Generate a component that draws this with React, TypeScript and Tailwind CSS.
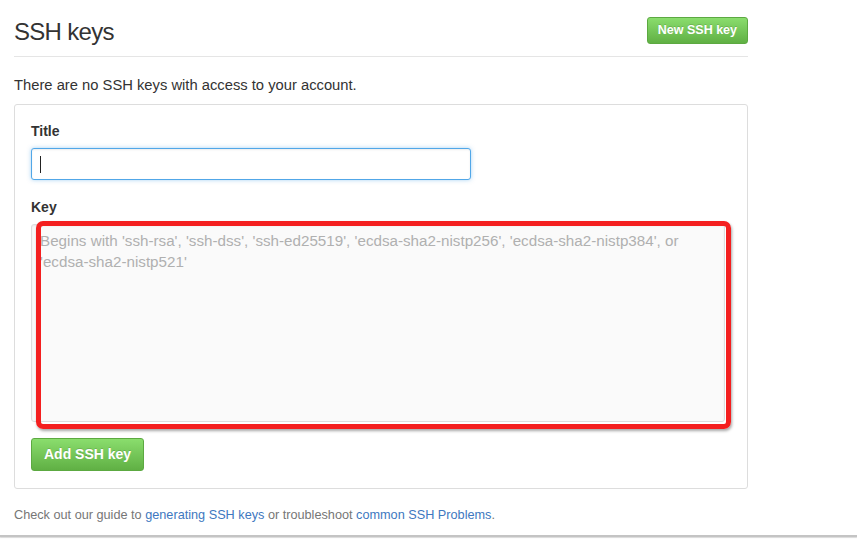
import React from "react";

export default function App() {
  return (
    <div className="relative w-[857px] h-[539px] overflow-hidden bg-white font-['Liberation_Sans',Arial,sans-serif] text-[#333]">
      <div className="ml-[14px] w-[734px] pt-[17px]">
        <div className="flex items-center justify-between border-b border-[#e5e5e5] pb-[12px]">
          <h2 className="translate-y-[1px] text-[24px] leading-[27px] font-normal tracking-[-0.7px] text-[#333]">SSH keys</h2>
          <button className="h-[27px] rounded-[3px] border border-[#5ca941] bg-gradient-to-b from-[#8add6d] to-[#60b044] px-[10px] text-[12.5px] font-bold leading-[25px] text-white [text-shadow:0_-1px_0_rgba(0,0,0,0.15)]">
            New SSH key
          </button>
        </div>
        <p className="mt-[18px] mb-[9px] text-[14.75px] leading-[20px]">There are no SSH keys with access to your account.</p>
        <div className="rounded-[3px] border border-[#ddd] px-[16px] pt-[16px] pb-[17px]">
          <label className="block text-[14px] font-bold leading-[20px] mb-[7px]">Title</label>
          <div className="relative h-[32px] w-[440px] rounded-[3px] border border-[#51a7e8] bg-white shadow-[inset_0_1px_2px_rgba(0,0,0,0.075),0_0_4px_rgba(81,167,232,0.5)]">
            <span className="absolute left-[8px] top-[7px] h-[17px] w-[1px] bg-[#222]" />
          </div>
          <label className="mt-[17px] block text-[14px] font-bold leading-[20px] mb-[7px]">Key</label>
          <textarea
            className="block h-[198px] w-[694px] resize-none rounded-[3px] border border-[#ddd] bg-[#fafafa] px-[8px] pt-[5px] text-[15.2px] leading-[21px] placeholder:text-[#b0b0b0] shadow-[inset_0_1px_2px_rgba(0,0,0,0.075)] outline-none"
            placeholder={"Begins with 'ssh-rsa', 'ssh-dss', 'ssh-ed25519', 'ecdsa-sha2-nistp256', 'ecdsa-sha2-nistp384', or\n'ecdsa-sha2-nistp521'"}
          />
          <button className="mt-[16px] h-[33px] rounded-[3px] border border-[#5ca941] bg-gradient-to-b from-[#8add6d] to-[#60b044] px-[12px] text-[14px] font-bold leading-[31px] text-white [text-shadow:0_-1px_0_rgba(0,0,0,0.15)]">
            Add SSH key
          </button>
        </div>
        <p className="mt-[16px] text-[12.7px] leading-[20px] text-[#767676]">
          Check out our guide to <a className="text-[#4078c0]">generating SSH keys</a> or troubleshoot{" "}
          <a className="text-[#4078c0]">common SSH Problems</a>.
        </p>
      </div>
      <div className="absolute left-[36px] top-[221px] h-[208px] w-[695px] rounded-[7px] border-[5px] border-[#f41f1f] shadow-[1px_2px_3px_rgba(0,0,0,0.35)]" />
      <div className="absolute left-0 top-[535px] h-[2px] w-full bg-[#c4c4c4] shadow-[0_1px_1px_rgba(0,0,0,0.15)]" />
    </div>
  );
}
